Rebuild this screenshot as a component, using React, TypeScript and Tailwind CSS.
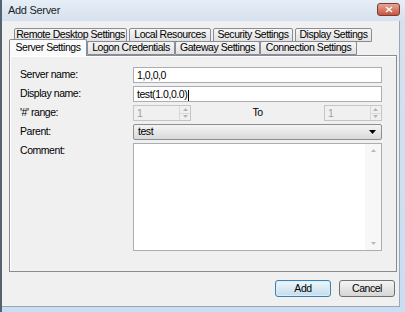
const font = { fontFamily: '"Liberation Sans", Arial, sans-serif' };

function Tab({ label, w, selected }: { label: string; w: number; selected?: boolean }) {
  if (selected) {
    return (
      <div
        className="relative z-10 shrink-0 whitespace-nowrap -mb-px -mt-[1px] h-[17px] flex items-center justify-center border border-b-0 border-[#898c95] bg-[#fafafa] rounded-t-[2px]"
        style={{ width: w }}
      >
        {label}
      </div>
    );
  }
  return (
    <div
      className="shrink-0 whitespace-nowrap h-[14px] flex items-center justify-center border border-[#898c95] bg-gradient-to-b from-[#f6f6f6] to-[#e1e1e1] rounded-t-[2px]"
      style={{ width: w }}
    >
      {label}
    </div>
  );
}

function Spin() {
  return (
    <div className="w-[58px] h-[16px] flex border border-[#c5c5c5] bg-[#f0f0f0]">
      <div className="flex-1 pl-[3px] leading-[14px] text-[#a0a0a0]">1</div>
      <div className="w-[11px] flex flex-col border-l border-[#d8d8d8]">
        <div className="flex-1 flex items-center justify-center border-b border-[#d8d8d8]">
          <svg width="5" height="3" viewBox="0 0 5 3"><path d="M2.5 0L5 3H0z" fill="#b4b4b4" /></svg>
        </div>
        <div className="flex-1 flex items-center justify-center">
          <svg width="5" height="3" viewBox="0 0 5 3"><path d="M0 0h5L2.5 3z" fill="#b4b4b4" /></svg>
        </div>
      </div>
    </div>
  );
}

export default function App() {
  return (
    <div
      className="w-[405px] h-[312px] flex flex-col bg-[#cfe0f1] border-l-2 border-[#56626e] text-[10.5px] tracking-[-0.45px] text-black"
      style={font}
    >
      <div className="h-[21px] flex items-center pl-[6px] pr-[5px] bg-gradient-to-b from-[#e6eef7] to-[#d5e1ee]">
        <span className="text-[11px] tracking-[-0.3px] text-[#1e1e1e]">Add Server</span>
        <div className="ml-auto mt-[-2px] w-[23px] h-[13px] flex items-center justify-center rounded-[3px] border border-[#7a3a2e] bg-gradient-to-b from-[#e8a597] to-[#c6533e]">
          <svg width="8" height="7" viewBox="0 0 8 7">
            <path d="M1 1l6 5M7 1L1 6" stroke="#fff" strokeWidth="1.6" />
          </svg>
        </div>
      </div>
      <div className="flex-1 flex flex-col pr-[5px] pb-[5px] bg-gradient-to-b from-[#d5e1ee] to-[#c8def3]">
        <div className="flex-1 flex flex-col bg-[#f0f0f0] border-r border-b border-[#9aa7b5] pl-[7px] pr-[2px] pt-[7px]">
          {/* tab headers */}
          <div className="flex gap-[2px] pl-[5px]">
            <Tab label="Remote Desktop Settings" w={113} />
            <Tab label="Local Resources" w={82} />
            <Tab label="Security Settings" w={80} />
            <Tab label="Display Settings" w={77} />
          </div>
          <div className="flex items-end -mt-[2px]">
            <Tab label="Server Settings" w={78} selected />
            <Tab label="Logon Credentials" w={88} />
            <Tab label="Gateway Settings" w={85} />
            <Tab label="Connection Settings" w={97} />
          </div>
          {/* panel */}
          <div className="h-[217px] shrink-0 border border-[#898c95] shadow-[inset_1px_1px_0_#ffffff] bg-[#f0f0f0] pl-[10px] pr-[14px] pt-[11px]">
            <div className="grid grid-cols-[113px_1fr] gap-y-[3px] items-center">
              <div>Server name:</div>
              <div className="h-[16px] border border-[#abadb3] bg-white pl-[3px] leading-[14px]">1,0,0,0</div>
              <div>Display name:</div>
              <div className="h-[16px] border border-[#abadb3] bg-white pl-[3px] leading-[14px]">
                test(1.0,0.0)<span className="inline-block w-px h-[11px] bg-black align-middle ml-px" />
              </div>
              <div>'#' range:</div>
              <div className="flex items-center justify-between">
                <Spin />
                <span>To</span>
                <Spin />
              </div>
              <div>Parent:</div>
              <div className="h-[16px] flex items-center border border-[#8f8f8f] rounded-[2px] bg-gradient-to-b from-[#f4f4f4] to-[#dadada] pl-[4px] pr-[5px]">
                <span>test</span>
                <svg className="ml-auto" width="7" height="4" viewBox="0 0 7 4"><path d="M0 0h7L3.5 4z" fill="#000" /></svg>
              </div>
              <div className="self-start">Comment:</div>
              <div className="h-[108px] flex border border-[#abadb3] bg-white">
                <div className="flex-1" />
                <div className="w-[16px] flex flex-col justify-between items-center bg-[#f7f7f7] py-[5px]">
                  <svg width="5" height="3" viewBox="0 0 5 3"><path d="M2.5 0L5 3H0z" fill="#b8b8b8" /></svg>
                  <svg width="5" height="3" viewBox="0 0 5 3"><path d="M0 0h5L2.5 3z" fill="#b8b8b8" /></svg>
                </div>
              </div>
            </div>
          </div>
          {/* buttons */}
          <div className="flex justify-end gap-[8px] pt-[8px] pr-[2px]">
            <div className="w-[56px] h-[17px] flex items-center justify-center rounded-[3px] border border-[#3c7fb1] bg-gradient-to-b from-[#eef6fb] to-[#c4dcec] shadow-[inset_0_0_0_1px_#d9eefb]">
              Add
            </div>
            <div className="w-[56px] h-[17px] flex items-center justify-center rounded-[3px] border border-[#707070] bg-gradient-to-b from-[#f4f4f4] to-[#d6d6d6]">
              Cancel
            </div>
          </div>
        </div>
      </div>
    </div>
  );
}
